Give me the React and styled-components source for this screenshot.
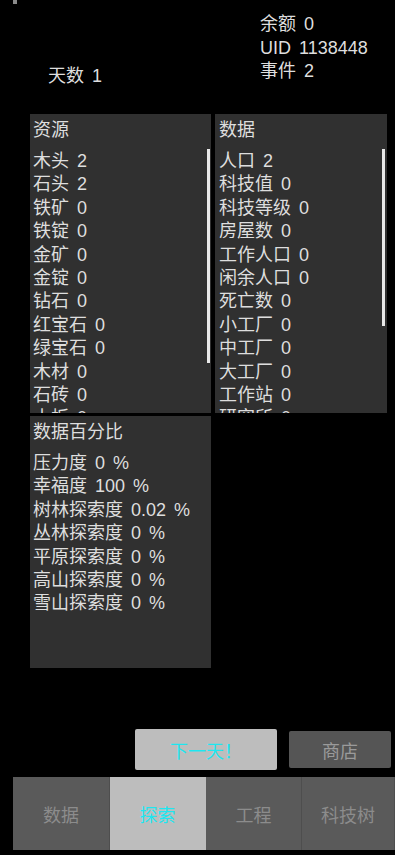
import React from "react";
import styled, { createGlobalStyle } from "styled-components";

const Global = createGlobalStyle`
  html, body { margin: 0; padding: 0; background: #000; }
  body { font-family: "Liberation Sans", "Noto Sans CJK SC", sans-serif; color: #dedede; word-spacing: 3px; }
  #root { min-height: 855px; }
`;

const Page = styled.div`
  position: relative;
  width: 395px;
  height: 855px;
  background: #000;
  display: flex;
  flex-direction: column;
  overflow: hidden;
`;

const Marker = styled.div`
  position: absolute;
  left: 13px;
  top: 0;
  width: 4px;
  height: 4px;
  background: #8a8a8a;
`;

const Header = styled.div`
  display: flex;
  align-items: flex-end;
  height: 101px;
  padding-top: 13px;
  box-sizing: border-box;
`;

const Days = styled.div`
  width: 260px;
  padding-left: 48px;
  box-sizing: border-box;
  font-size: 18px;
  line-height: 23.5px;
  margin-bottom: 13px;
  white-space: nowrap;
`;

const Stats = styled.div`
  align-self: flex-start;
  display: flex;
  flex-direction: column;
  font-size: 18px;
  line-height: 23.5px;
`;

const Line = styled.div`
  white-space: nowrap;
`;

const Grid = styled.div`
  display: grid;
  grid-template-columns: 181px 172px;
  grid-template-rows: 299px 252px;
  column-gap: 4px;
  row-gap: 3px;
  padding-left: 30px;
  margin-top: 13px;
`;

const Panel = styled.div`
  position: relative;
  background: #303030;
  overflow: hidden;
  padding: 4px 0 0 ${(p) => p.$pad}px;
  box-sizing: border-box;
  font-size: 18px;
`;

const PanelTitle = styled.div`
  line-height: 24px;
  height: 24px;
  margin-bottom: 8px;
`;

const Item = styled.div`
  line-height: 23.4px;
  height: 23.4px;
  white-space: nowrap;
`;

const Scroll = styled.div`
  position: absolute;
  right: ${(p) => p.$right}px;
  top: 35px;
  width: 3px;
  height: ${(p) => p.$h}px;
  background: #e8e8e8;
`;

const Actions = styled.div`
  display: flex;
  align-items: center;
  margin-top: 59px;
  padding-left: 135px;
  gap: 12px;
  height: 45px;
`;

const ActionButton = styled.div`
  width: ${(p) => p.$w}px;
  height: ${(p) => p.$h}px;
  background: ${(p) => (p.$primary ? "#bdbdbd" : "#555555")};
  color: ${(p) => (p.$primary ? "#1ee6f0" : "#9a9a9a")};
  border-radius: 2px;
  display: flex;
  align-items: center;
  justify-content: center;
  font-size: 18px;
`;

const Tabs = styled.div`
  margin-top: 5px;
  margin-left: 13px;
  height: 73px;
  display: grid;
  grid-template-columns: 97px 96px 96px 1fr;
`;

const Tab = styled.div`
  background: ${(p) => (p.$active ? "#bdbdbd" : "#5a5a5a")};
  color: ${(p) => (p.$active ? "#1ee6f0" : "#8c8c8c")};
  border-right: 1px solid ${(p) => (p.$active ? "#bdbdbd" : "#4e4e4e")};
  display: flex;
  align-items: center;
  justify-content: center;
  font-size: 18px;
`;

const resources = [
  "木头 2", "石头 2", "铁矿 0", "铁锭 0", "金矿 0", "金锭 0", "钻石 0",
  "红宝石 0", "绿宝石 0", "木材 0", "石砖 0", "木板 0", "玻璃 0",
];
const data = [
  "人口 2", "科技值 0", "科技等级 0", "房屋数 0", "工作人口 0", "闲余人口 0",
  "死亡数 0", "小工厂 0", "中工厂 0", "大工厂 0", "工作站 0", "研究所 0",
];
const percents = [
  "压力度 0 %", "幸福度 100 %", "树林探索度 0.02 %", "丛林探索度 0 %",
  "平原探索度 0 %", "高山探索度 0 %", "雪山探索度 0 %",
];
const tabs = ["数据", "探索", "工程", "科技树"];

export default function App() {
  return (
    <Page>
      <Global />
      <Marker />
      <Header>
        <Days>天数 1</Days>
        <Stats>
          <Line>余额 0</Line>
          <Line>UID 1138448</Line>
          <Line>事件 2</Line>
        </Stats>
      </Header>
      <Grid>
        <Panel $pad={3}>
          <PanelTitle>资源</PanelTitle>
          {resources.map((r) => (
            <Item key={r}>{r}</Item>
          ))}
          <Scroll $right={1} $h={214} />
        </Panel>
        <Panel $pad={4}>
          <PanelTitle>数据</PanelTitle>
          {data.map((r) => (
            <Item key={r}>{r}</Item>
          ))}
          <Scroll $right={2} $h={177} />
        </Panel>
        <Panel $pad={3}>
          <PanelTitle>数据百分比</PanelTitle>
          {percents.map((r) => (
            <Item key={r}>{r}</Item>
          ))}
        </Panel>
      </Grid>
      <Actions>
        <ActionButton $primary $w={142} $h={41}>下一天！</ActionButton>
        <ActionButton $w={102} $h={37}>商店</ActionButton>
      </Actions>
      <Tabs>
        {tabs.map((t) => (
          <Tab key={t} $active={t === "探索"}>{t}</Tab>
        ))}
      </Tabs>
    </Page>
  );
}
